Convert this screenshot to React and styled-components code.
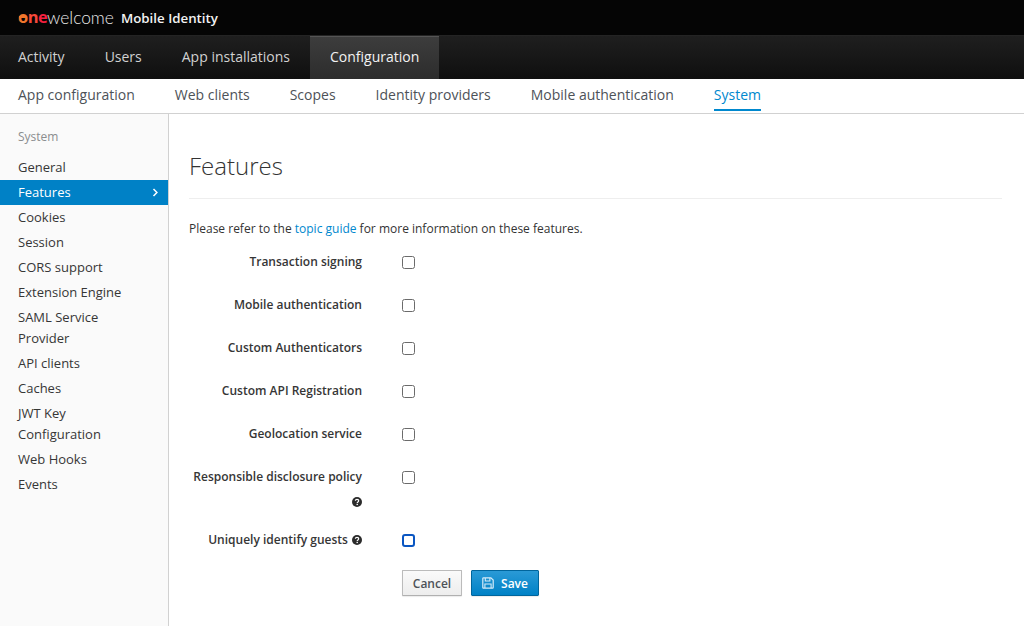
import styled, { createGlobalStyle } from 'styled-components';

const GlobalStyle = createGlobalStyle`
  html, body {
    margin: 0;
    height: 100%;
    overflow: hidden;
    background: #fff;
    font-family: "Open Sans", "Liberation Sans", sans-serif;
    color: #333;
  }
  * { box-sizing: border-box; }
`;

const Page = styled.div`
  display: flex;
  flex-direction: column;
  height: 626px;
`;

const Brandbar = styled.header`
  display: flex;
  align-items: center;
  height: 36px;
  padding-left: 18px;
  background: #050505;
  border-bottom: 1px solid #242424;
`;

const Logo = styled.span`
  display: inline-flex;
  font-family: "Lato", sans-serif;
  font-size: 17.4px;
  line-height: 1;
  color: #e8e8e8;
  font-weight: 300;
  margin-right: 7px;
`;

const LogoOne = styled.span`
  font-family: "Open Sans", sans-serif;
  font-size: 16.5px;
  font-weight: 700;
  letter-spacing: -0.6px;
  color: #f5203f;
`;

const LogoO = styled.span`
  position: relative;
  color: #f0762c;

  &::after {
    content: '';
    position: absolute;
    left: 1px;
    right: 1px;
    top: 11px;
    height: 2px;
    background: #f0762c;
  }
`;

const LogoN = styled.span`
  color: #f5483a;
`;

const ProductName = styled.span`
  color: #f2f2f2;
  font-size: 13.3px;
  font-weight: 600;
`;

const MainNav = styled.nav`
  display: flex;
  height: 43px;
  background: linear-gradient(#1f1f1f, #0f0f0f);
`;

const MainTab = styled.a`
  display: flex;
  align-items: center;
  padding: 0 20px 3px;
  margin-left: ${({ $first }) => ($first ? '-2px' : '0')};
  font-size: 14px;
  color: ${({ $active }) => ($active ? '#f2f2f2' : '#d1d1d1')};
  background: ${({ $active }) => ($active ? 'linear-gradient(#3d3d3d, #2c2c2c)' : 'transparent')};
  border-top: ${({ $active }) => ($active ? '1px solid #555' : 'none')};
`;

const SubNav = styled.nav`
  display: flex;
  gap: 40px;
  height: 35px;
  padding-left: 18px;
  background: #fff;
  border-bottom: 1px solid #d1d1d1;
`;

const SubTab = styled.a`
  height: 28px;
  margin-top: 4px;
  line-height: 24px;
  font-size: 14px;
  color: ${({ $active }) => ($active ? '#0088ce' : '#4d5258')};
  border-bottom: ${({ $active }) => ($active ? '2px solid #0088ce' : 'none')};
`;

const Body = styled.div`
  display: flex;
  flex: 1;
  min-height: 0;
`;

const Sidebar = styled.aside`
  width: 169px;
  flex: none;
  padding-top: 13px;
  background: #fafafa;
  border-right: 1px solid #d1d1d1;
`;

const SideTitle = styled.div`
  padding: 0 18px;
  margin-bottom: 8px;
  font-size: 12px;
  line-height: 20px;
  color: #8b8d8f;
`;

const SideItem = styled.a`
  display: flex;
  justify-content: space-between;
  align-items: center;
  padding: 2px ${({ $active }) => ($active ? '9px' : '30px')} 2px 18px;
  font-size: 13px;
  line-height: 21px;
  color: ${({ $active }) => ($active ? '#fff' : '#363636')};
  background: ${({ $active }) => ($active ? '#0081c6' : 'transparent')};
`;

const Content = styled.main`
  flex: 1;
  padding: 0 22px 0 20px;
`;

const Heading = styled.h1`
  margin: 35px 0 0;
  padding-bottom: 16px;
  font-size: 24px;
  line-height: 33px;
  font-weight: 300;
  color: #333;
  border-bottom: 1px solid #eee;
`;

const Intro = styled.p`
  margin: 21px 0 0;
  font-size: 12px;
  line-height: 18px;
  color: #333;
`;

const TopicLink = styled.a`
  color: #0088ce;
`;

const Form = styled.form`
  margin-top: 12px;
`;

const Row = styled.div`
  display: grid;
  grid-template-columns: 173px 1fr;
  column-gap: 40px;
  margin-bottom: ${({ $tall }) => ($tall ? '13px' : '20px')};
`;

const Label = styled.label`
  text-align: right;
  font-size: 12px;
  line-height: 23px;
  font-weight: 600;
  color: #363636;
`;

const HelpLine = styled.span`
  display: block;
  line-height: 27px;
`;

const HelpIcon = styled.svg`
  width: 10px;
  height: 10px;
  vertical-align: -1px;
  margin-left: 1px;
`;

const Check = styled.span`
  width: 13px;
  height: 13px;
  margin-top: 6px;
  background: #fff;
  border: ${({ $focused }) => ($focused ? '2.5px solid #0a56c2' : '1px solid #6b6b6b')};
  border-radius: ${({ $focused }) => ($focused ? '3px' : '2.5px')};
`;

const Actions = styled.div`
  display: flex;
  gap: 9px;
  margin: -1px 0 0 213px;
`;

const CancelButton = styled.button`
  width: 60px;
  height: 26px;
  padding: 0;
  font: 600 12px "Open Sans", sans-serif;
  color: #4d5258;
  background: linear-gradient(#fafafa, #ededed);
  border: 1px solid #bbb;
  border-bottom-color: #b0b0b0;
  border-radius: 1px;
  box-shadow: 0 1px 1px rgba(0, 0, 0, 0.08);
`;

const SaveButton = styled.button`
  display: flex;
  align-items: center;
  justify-content: center;
  gap: 7px;
  width: 68px;
  height: 26px;
  padding: 0;
  font: 600 12px "Open Sans", sans-serif;
  color: #fff;
  background: linear-gradient(#2a9ad6, #0081c6);
  border: 1px solid #00659c;
  border-radius: 1px;
  box-shadow: 0 1px 1px rgba(0, 0, 0, 0.08);
`;

const Help = () => (
  <HelpIcon viewBox="0 0 20 20" aria-hidden="true">
    <circle cx="10" cy="10" r="10" fill="#2b2b2b" />
    <path d="M6.6 7.6C6.8 5.7 8.2 4.8 10 4.8c2 0 3.4 1.1 3.4 2.8 0 2.4-3 2.3-3 4.6" fill="none" stroke="#fff" strokeWidth="2.4" />
    <rect x="9" y="13.6" width="2.8" height="2.6" fill="#fff" />
  </HelpIcon>
);

const SaveIcon = () => (
  <svg width="12" height="12" viewBox="0 0 12 12" aria-hidden="true">
    <path d="M1.5.8h7.4l2.3 2.3v7.4a.7.7 0 0 1-.7.7H1.5a.7.7 0 0 1-.7-.7v-9a.7.7 0 0 1 .7-.7z" fill="none" stroke="#d6ecf8" strokeWidth="1.2" />
    <path d="M3.3 1v3h4.6V1M2.9 11V7h6.2v4" fill="none" stroke="#d6ecf8" strokeWidth="1.1" />
  </svg>
);

const Chevron = () => (
  <svg width="7" height="9" viewBox="0 0 7 9" aria-hidden="true">
    <path d="M1.5 1l3.4 3.5L1.5 8" fill="none" stroke="#fff" strokeWidth="1.5" />
  </svg>
);

const mainTabs = ['Activity', 'Users', 'App installations', 'Configuration'];
const subTabs = ['App configuration', 'Web clients', 'Scopes', 'Identity providers', 'Mobile authentication', 'System'];
const sideItems = ['General', 'Features', 'Cookies', 'Session', 'CORS support', 'Extension Engine', 'SAML Service Provider', 'API clients', 'Caches', 'JWT Key Configuration', 'Web Hooks', 'Events'];
const features = ['Transaction signing', 'Mobile authentication', 'Custom Authenticators', 'Custom API Registration', 'Geolocation service'];

const App = () => {
  return (
    <Page>
      <GlobalStyle />
      <Brandbar>
        <Logo><LogoOne><LogoO>o</LogoO><LogoN>n</LogoN>e</LogoOne>welcome</Logo>
        <ProductName>Mobile Identity</ProductName>
      </Brandbar>
      <MainNav>
        {mainTabs.map((tab, i) => (
          <MainTab key={tab} $first={i === 0} $active={tab === 'Configuration'}>{tab}</MainTab>
        ))}
      </MainNav>
      <SubNav>
        {subTabs.map((tab) => (
          <SubTab key={tab} $active={tab === 'System'}>{tab}</SubTab>
        ))}
      </SubNav>
      <Body>
        <Sidebar>
          <SideTitle>System</SideTitle>
          {sideItems.map((item) => (
            <SideItem key={item} $active={item === 'Features'}>
              {item}
              {item === 'Features' && <Chevron />}
            </SideItem>
          ))}
        </Sidebar>
        <Content>
          <Heading>Features</Heading>
          <Intro>Please refer to the <TopicLink>topic guide</TopicLink> for more information on these features.</Intro>
          <Form>
            {features.map((feature) => (
              <Row key={feature}>
                <Label>{feature}</Label>
                <Check />
              </Row>
            ))}
            <Row $tall>
              <Label>Responsible disclosure policy <HelpLine><Help /></HelpLine></Label>
              <Check />
            </Row>
            <Row>
              <Label>Uniquely identify guests <Help /></Label>
              <Check $focused />
            </Row>
            <Actions>
              <CancelButton type="button">Cancel</CancelButton>
              <SaveButton type="button"><SaveIcon />Save</SaveButton>
            </Actions>
          </Form>
        </Content>
      </Body>
    </Page>
  );
};

export default App;
